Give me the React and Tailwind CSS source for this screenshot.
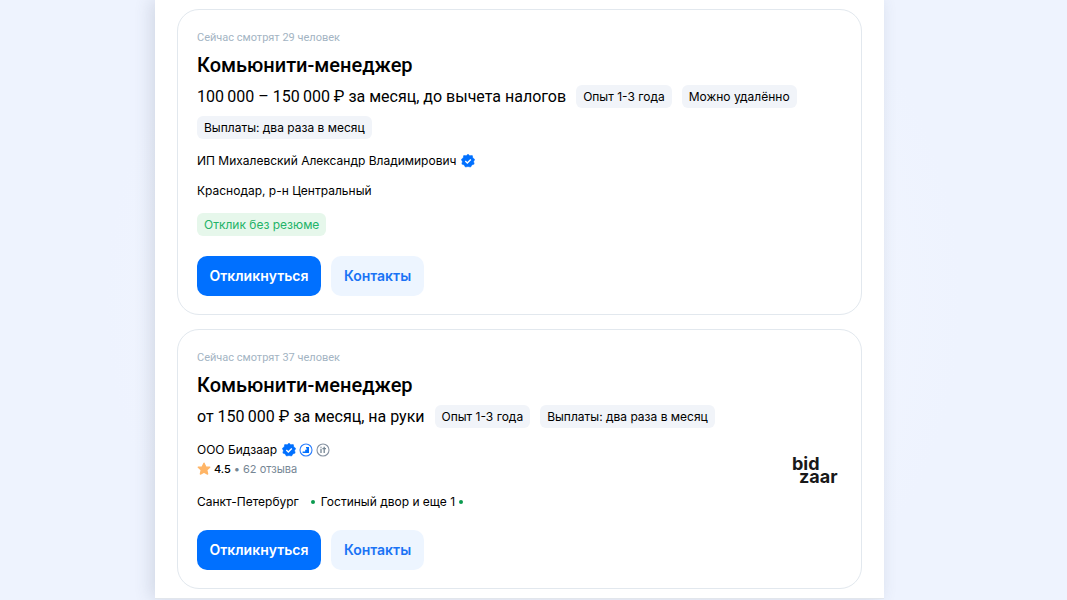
// App.jsx
// Vacancy search results: a white column with one card per vacancy.

const vacancies = [
  {
    id: 1,
    viewers: 29,
    title: 'Комьюнити-менеджер',
    salary: '100\u2009000 – 150\u2009000 ₽ за месяц, до вычета налогов',
    tags: ['Опыт 1-3 года', 'Можно удалённо', 'Выплаты: два раза в месяц'],
    company: 'ИП Михалевский Александр Владимирович',
    city: 'Краснодар, р-н Центральный',
    noResume: true,
  },
  {
    id: 2,
    viewers: 37,
    title: 'Комьюнити-менеджер',
    salary: 'от 150\u2009000 ₽ за месяц, на руки',
    tags: ['Опыт 1-3 года', 'Выплаты: два раза в месяц'],
    company: 'ООО Бидзаар',
    badges: true,
    rating: '4.5',
    reviews: '62 отзыва',
    city: 'Санкт-Петербург',
    metro: 'Гостиный двор и еще 1',
    logo: true,
  },
];

function VerifiedIcon() {
  return (
    <svg className="h-3.5 w-3.5 shrink-0" viewBox="0 0 14 14" aria-hidden="true">
      <path
        d="M7 .2l1.8 1.5 2.5-.1.5 2.4 1.9 1.4L12.6 7.5l.5 2.6-2.3.8-1.2 2.1L7 12.5l-2.6.5-1.2-2.1-2.3-.8.5-2.6L.3 5.4 2.2 4l.5-2.4 2.5.1z"
        fill="#0070ff"
        stroke="#0070ff"
        strokeWidth=".6"
        strokeLinejoin="round"
      />
      <path d="M4.3 7.1l2 1.9 3.5-3.6" fill="none" stroke="#fff" strokeWidth="1.4" />
    </svg>
  );
}

function GrowthIcon() {
  return (
    <svg className="h-3.5 w-3.5 shrink-0" viewBox="0 0 14 14" aria-hidden="true">
      <circle cx="7" cy="7" r="6" fill="none" stroke="#2b7fff" strokeWidth="1.1" />
      <path d="M3.6 9.9V8.4h2.6V6.8h1.4V5.3H7V4h3v5.9z" fill="#0070ff" />
    </svg>
  );
}

function ItIcon() {
  return (
    <svg className="h-3.5 w-3.5 shrink-0" viewBox="0 0 14 14" aria-hidden="true">
      <circle cx="7" cy="7" r="6" fill="none" stroke="#8793a3" strokeWidth="1.1" />
      <path d="M5 5.8V10M5 3.8v1M8.2 3.8V10M6.4 5.7H10" fill="none" stroke="#768694" strokeWidth="1.3" />
    </svg>
  );
}

function StarIcon() {
  return (
    <svg className="h-3.5 w-3.5 shrink-0" viewBox="0 0 14 14" aria-hidden="true">
      <path
        d="M7 1.2l1.7 3.7 4 .4-3 2.7.9 4L7 10.2 3.4 12l.9-4-3-2.7 4-.4z"
        fill="#ffb566"
        stroke="#ffb566"
        strokeWidth="1.4"
        strokeLinejoin="round"
      />
    </svg>
  );
}

function BidzaarLogo() {
  return (
    <svg
      className="h-[60px] w-[52px] shrink-0"
      viewBox="0 0 52 60"
      role="img"
      aria-label="bidzaar"
      fontFamily='"Inter", sans-serif'
      fontWeight="700"
      fontSize="18"
      fill="#191919"
    >
      <text>
        <tspan x="2" y="30">bid</tspan>
        <tspan x="9" y="43">zaar</tspan>
      </text>
    </svg>
  );
}

function Tag({ children }) {
  return (
    <span className="flex h-[23px] items-center rounded-md bg-[#f1f4f9] px-[7px] text-xs">
      {children}
    </span>
  );
}

function VacancyCard({ vacancy }) {
  return (
    <article className="rounded-[22px] border border-[#e2e8ee] px-[19px] pt-5 pb-[18px]">
      <p className="font-['Roboto',sans-serif] text-[11px] leading-4 text-[#a3b4c3]">
        Сейчас смотрят {vacancy.viewers} человек
      </p>
      <h2 className="mt-1 font-['Roboto',sans-serif] text-xl leading-[30px] font-medium">
        <a href="#vacancy">{vacancy.title}</a>
      </h2>

      {/* Salary and tags share one wrapping line */}
      <div className="mt-[5px] flex flex-wrap gap-x-2.5 gap-y-2">
        <span className="font-['Roboto',sans-serif] text-base leading-[23px]">{vacancy.salary}</span>
        {vacancy.tags.map((tag) => (
          <Tag key={tag}>{tag}</Tag>
        ))}
      </div>

      <div className="mt-3 flex justify-between">
        <div className="text-xs">
          <div className="flex h-5 items-center gap-[3px]">
            <a href="#company" className="mr-0.5">{vacancy.company}</a>
            <VerifiedIcon />
            {vacancy.badges && (
              <>
                <GrowthIcon />
                <ItIcon />
              </>
            )}
          </div>

          {vacancy.rating && (
            <div className="flex h-[22px] items-center gap-[3px] pb-1 text-[11px]">
              <StarIcon />
              <span className="font-medium">{vacancy.rating}</span>
              <span className="text-[#768694]">•</span>
              <a href="#reviews" className="text-[#768694]">{vacancy.reviews}</a>
            </div>
          )}

          <div className="mt-2.5 flex h-5 items-center gap-1">
            <span>{vacancy.city}</span>
            {vacancy.metro && (
              <>
                <span className="mr-0.5 ml-2 h-1 w-1 rounded-full bg-[#0a9a4f]" />
                <span>{vacancy.metro}</span>
                <span className="h-1 w-1 rounded-full bg-[#0a9a4f]" />
              </>
            )}
          </div>
        </div>
        {vacancy.logo && <BidzaarLogo />}
      </div>

      {vacancy.noResume && (
        <div className="mt-3 flex">
          <span className="flex h-[23px] items-center rounded-md bg-[#e6f7eb] px-[7px] text-xs text-[#23b368]">
            Отклик без резюме
          </span>
        </div>
      )}

      <div className={vacancy.noResume ? 'mt-5 flex gap-2.5' : 'mt-[18px] flex gap-2.5'}>
        <button type="button" className="h-10 w-[124px] rounded-[10px] bg-[#0070ff] text-sm font-semibold text-white">
          Откликнуться
        </button>
        <button type="button" className="h-10 w-[93px] rounded-[10px] bg-[#edf5ff] text-sm font-semibold text-[#1a73f5]">
          Контакты
        </button>
      </div>
    </article>
  );
}

export default function App() {
  return (
    <div className="min-h-screen bg-[#eef3fe] bg-[radial-gradient(circle_at_50%_50%,#f3f7ff_35%,#eef3fe_70%)] pr-[183px] pl-[155px] font-['Inter',sans-serif] text-black">
      <main className="flex flex-col gap-3.5 border-b border-[#e2e6ec] bg-white px-[22px] pt-[9px] pb-[9px] shadow-[-4px_0_16px_rgba(60,75,100,0.16)]">
        {vacancies.map((vacancy) => (
          <VacancyCard key={vacancy.id} vacancy={vacancy} />
        ))}
      </main>
    </div>
  );
}
